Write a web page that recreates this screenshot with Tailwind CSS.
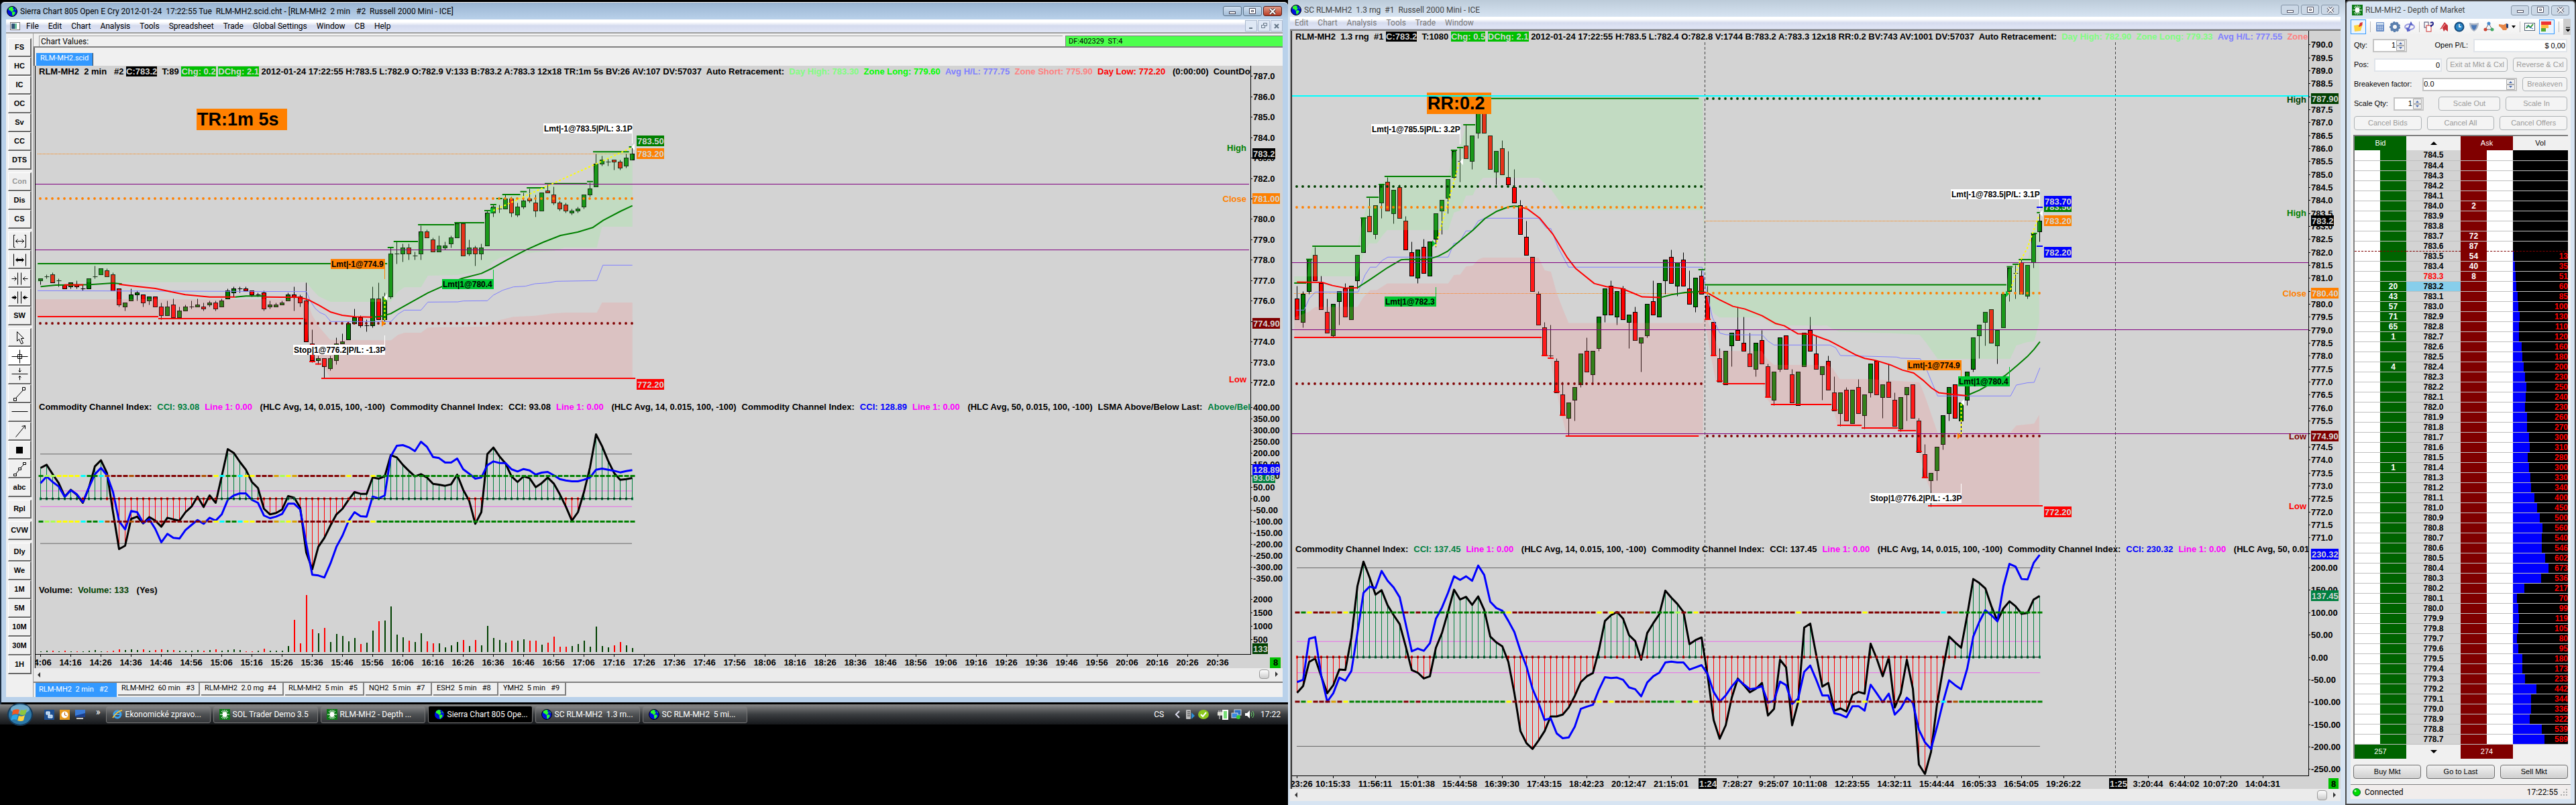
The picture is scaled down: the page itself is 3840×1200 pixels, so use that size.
<!DOCTYPE html>
<html lang="en">
<head>
  <meta charset="UTF-8">
  <meta name="viewport" content="width=device-width, initial-scale=1.0">
  <title>Sierra Chart - RLM-MH2</title>
  <script src="https://cdn.jsdelivr.net/npm/@tailwindcss/browser@4"></script>
</head>
<body class="bg-black font-['Liberation_Sans',sans-serif] text-black">
  <!-- Shared icons -->
  <svg class="hidden">
    <symbol id="globe" viewBox="0 0 16 16">
      <circle cx="8" cy="8" r="7.5" fill="#0010e0" stroke="#000"/>
      <path d="M3 3l4-2 3 1-1 2 2 1-2 3-2 1-1-2-3-1zM8 9l3-1 2 2-2 3-2 2-1-3zM12 3l2 2-1 1z" fill="#2bff2b"/>
    </symbol>
    <symbol id="sun" viewBox="0 0 16 16">
      <rect width="16" height="16" fill="#0a7a14"/>
      <circle cx="8" cy="8" r="3.5" fill="#fff"/>
      <path d="M8 1v14M1 8h14M3 3l10 10M13 3L3 13M5 1.500l6 13M11 1.500l-6 13" stroke="#fff"/>
    </symbol>
  </svg>

  <main class="flex min-h-screen">
    <!-- Left monitor -->
    <div class="flex w-1/2 flex-col">
      <section class="flex flex-col bg-[#b9d1ea] mt-[3px] rounded-t-md border-l-2 border-[#1c2e42]">
        <!-- Title bar -->
        <header class="flex h-[26px] items-center rounded-t-md border-t border-white bg-linear-to-b from-[#99b4d1] to-[#b9d1ea] pl-2 pr-[9px]">
          <svg class="mr-1 size-4"><use href="#globe"/></svg>
          <h1 class="flex-1 whitespace-pre font-['Roboto',sans-serif] text-xs">Sierra Chart 805 Open E Cry 2012-01-24  17:22:55 Tue  RLM-MH2.scid.cht - [RLM-MH2  2 min   #2  Russell 2000 Mini - ICE]</h1>
          <div class="flex gap-[2px]">
            <button aria-label="Minimize" class="grid h-[15px] w-7 place-items-center rounded-[3px] border border-[#5b7287] bg-linear-to-b from-[#cfdeee] to-[#a4bdd8]"><svg width="12" height="10"><rect x="1.5" y="5.5" width="9" height="3" fill="#fff" stroke="#445"/></svg></button>
            <button aria-label="Maximize" class="grid h-[15px] w-7 place-items-center rounded-[3px] border border-[#5b7287] bg-linear-to-b from-[#cfdeee] to-[#a4bdd8]"><svg width="12" height="10"><path d="M1.500 .5h9v8h-9zM4.500 3.500h3v2h-3z" fill="#fff" stroke="#445"/></svg></button>
            <button aria-label="Close" class="grid h-[15px] w-7 place-items-center rounded-[3px] border border-[#5a1c14] bg-linear-to-b from-[#e09a88] to-[#b83a22]"><svg width="12" height="10"><path d="M2 1l8 8M10 1l-8 8" stroke="#433" stroke-width="4"/><path d="M2 1l8 8M10 1l-8 8" stroke="#fff" stroke-width="2"/></svg></button>
          </div>
        </header>

        <div class="ml-[7px] mr-2 flex flex-col bg-[#f0f0f0]">
          <!-- Menu -->
          <nav class="flex h-[21px] items-center border-b-2 border-[#a0a0a0] bg-linear-to-b from-white from-20% via-[#d5dbee] via-50% to-[#e1e6f6] pl-[6px] font-['Roboto',sans-serif] text-xs">
            <svg class="mr-2 h-3 w-4"><rect x=".5" y=".5" width="14" height="11" fill="#fff" stroke="#777"/><rect x="2" y="2" width="5" height="8" fill="#357"/><rect x="7" y="2" width="3" height="8" fill="#6b9"/></svg>
            <div id="menu" class="flex flex-1 gap-[14px]"></div>
            <div class="flex gap-px text-[#5b6b80]">
              <button aria-label="Minimize chart" class="grid h-[17px] w-[18px] place-items-center border border-[#a9b8ce] bg-[#dfe8f5]"><svg width="8" height="8"><rect x="1" y="6" width="5" height="2" fill="#678"/></svg></button>
              <button aria-label="Restore chart" class="grid h-[17px] w-[18px] place-items-center border border-[#a9b8ce] bg-[#dfe8f5]"><svg width="9" height="9"><path d="M3.500 3V.5h5v4H6M.5 3.500h5v4h-5z" fill="none" stroke="#678"/></svg></button>
              <button aria-label="Close chart" class="grid h-[17px] w-[18px] place-items-center border border-[#a9b8ce] bg-[#dfe8f5]"><svg width="8" height="8"><path d="M1 1l6 6M7 1L1 7" stroke="#678" stroke-width="2"/></svg></button>
            </div>
          </nav>

          <div class="flex">
            <!-- Tool buttons -->
            <aside id="tools" class="flex w-[41px] shrink-0 flex-col gap-1 border-r border-[#a0a0a0] pl-[3px] pr-[2px] pt-[7px] text-[11px] font-bold"></aside>

            <div class="flex min-w-0 flex-1 flex-col">
              <div class="flex h-[21px] items-center border-b-2 border-[#808080] pt-[3px] font-['Roboto',sans-serif] text-xs">
                <div class="ml-2 h-full flex-1 border-l border-t border-[#a0a0a0] pl-[2px] leading-4">Chart Values:</div>
                <div class="ml-1 h-full w-[324px] border-l border-t border-[#808080] bg-[#4dff4d] pl-1 text-[11px] leading-4 whitespace-pre">DF:402329  ST:4</div>
              </div>
              <div class="h-[27px] border-l-2 border-[#696969] pl-[2px] pt-[2px]">
                <button class="h-[21px] w-[85px] border-r border-[#444] bg-[#3399ff] pb-1 text-left pl-[6px] font-['Roboto',sans-serif] text-[11px] text-white">RLM-MH2.scid</button>
              </div>

              <!-- 2 min chart -->
              <div class="flex h-[898px] bg-[#d3d3d3] pl-[2px]">
                <div class="relative min-w-0 flex-1 overflow-hidden border-l border-black">
                  <svg class="absolute inset-0 size-full text-xs font-bold"><g id="chart-a" transform="translate(-53 -98)"></g></svg>
                  <div id="head-a" class="absolute left-[5px] top-px flex whitespace-pre text-[13px] leading-[15px] font-bold"></div>
                  <div id="cci-a" class="absolute left-[5px] top-[501px] flex gap-2 whitespace-pre text-[13px] leading-[15px] font-bold"></div>
                  <div class="absolute left-[5px] top-[774px] flex gap-2 whitespace-pre text-[13px] leading-[15px] font-bold"><span>Volume:</span><span class="text-[#004000]">Volume: 133</span><span> (Yes)</span></div>
                </div>
                <svg class="w-[48px] shrink-0 text-[13px] font-bold"><g id="axis-a" transform="translate(-1864 -98)"></g></svg>
              </div>

              <div class="flex h-5 items-start justify-between bg-[#ebebeb] pl-[5px] pr-[6px] pt-[2px]">
                <svg class="mt-1" width="6" height="8"><path d="M5 0v8L1 4z" fill="#333"/></svg>
                <div class="flex items-center gap-2"><div class="h-[14px] w-[15px] rounded-sm border border-[#999] bg-linear-to-b from-white to-[#ccc]"></div><svg width="6" height="8"><path d="M1 0v8l4-4z" fill="#333"/></svg></div>
              </div>
              <!-- Chart tabs -->
              <div id="tabs" class="flex h-[23px] gap-[2px] border-t-2 border-[#808080] pl-[3px] font-['Roboto',sans-serif] text-[11px] whitespace-pre"></div>
            </div>
          </div>
        </div>
        <div class="h-[11px] border-b-[3px] border-black"></div>
      </section>

      <!-- Taskbar -->
      <footer class="flex h-[30px] items-center bg-linear-to-b from-[#8a8a8a] via-[#3a3d40] via-50% to-[#16181b] pl-[10px] pr-[11px] font-['Roboto',sans-serif] text-xs text-white">
        <button aria-label="Start" class="-my-2"><svg class="h-[34px] w-10" viewBox="0 0 40 34"><ellipse cx="20" cy="17" rx="19" ry="17" fill="#153a5a"/><ellipse cx="20" cy="17" rx="17" ry="15" fill="#2b78a8"/><ellipse cx="20" cy="9" rx="14" ry="7" fill="#8fc0dc" opacity=".7"/><path d="M9 11q5-3 10-1l-2 7q-5-2-9 1z" fill="#f15a22"/><path d="M21 10q5 2 9-1l-2 8q-4 2-9 0z" fill="#8cc63f"/><path d="M8 19q4-3 9-1l-2 7q-5-2-9 1z" fill="#2aa5e8"/><path d="M18 19q5 2 9-1l-2 8q-4 2-9 0z" fill="#ffd23c"/></svg></button>
        <div class="ml-4 flex items-center gap-2">
          <svg width="15" height="15"><rect width="15" height="15" fill="#1d4f91"/><path d="M3 3h5v4H3zM6 8h6v4H6z" fill="#9cc8f0" stroke="#fff"/></svg>
          <svg width="15" height="15"><rect width="15" height="15" fill="#e89a20"/><circle cx="7.500" cy="7.500" r="5" fill="#fff"/><path d="M7.500 4v4l3 1" fill="none" stroke="#b50"/></svg>
          <svg width="15" height="15"><rect width="15" height="11" fill="#3a7bd8"/><path d="M0 9l15-4v6H0z" fill="#1c3f8a"/><rect x="2" y="12" width="10" height="2" fill="#ccc"/></svg>
        </div>
        <span class="ml-4 mr-2 -mt-2 text-sm">»</span>
        <div id="tasks" class="flex flex-1 gap-1"></div>
        <span class="mr-4">CS</span>
        <svg class="mr-2" width="8" height="12"><path d="M7 1L2 6l5 5" fill="none" stroke="#dde" stroke-width="2"/></svg>
        <div class="mr-2 flex items-center gap-1">
          <svg width="15" height="16"><rect x="1" y="1" width="7" height="14" rx="1" fill="#bbb"/><path d="M3 4h4M3 7h4M3 10h4" stroke="#333"/><path d="M9 5l5 5-5 5z" fill="#2a8fd8"/></svg>
          <svg width="17" height="16"><ellipse cx="8" cy="8" rx="8" ry="7" fill="#8cc81e"/><path d="M4 8l3 3 5-6" fill="none" stroke="#fff" stroke-width="2"/></svg>
          <svg class="ml-2" width="16" height="16"><rect x="8" y="2" width="7" height="13" fill="#7d7" stroke="#fff" stroke-width="2"/><path d="M2 2v3M5 2v3M0 5h7v4H0zM3 9v6" stroke="#eee" fill="#ddc"/></svg>
          <svg width="16" height="16"><rect x="5" y="1" width="10" height="8" fill="#2b6fc4" stroke="#ddd"/><rect x="1" y="6" width="9" height="7" fill="#3d8be0" stroke="#ddd"/><circle cx="11" cy="12" r="3" fill="#3c3"/></svg>
          <svg width="16" height="16"><path d="M1 6h3l4-4v12l-4-4H1z" fill="#fff"/><path d="M10 5q2 3 0 6M12 3q4 5 0 10" fill="none" stroke="#6d6"/></svg>
        </div>
        <span>17:22</span>
      </footer>
    </div>

    <!-- Range chart window -->
    <section class="flex min-w-0 flex-1 flex-col bg-[#d7e4f2]">
      <header class="flex h-[25px] items-center bg-linear-to-b from-[#bccbd9] to-[#d7e4f2] pl-1 pr-[9px] pt-1">
        <svg class="mr-1 size-4"><use href="#globe"/></svg>
        <h2 class="flex-1 whitespace-pre font-['Roboto',sans-serif] text-xs text-[#444]">SC RLM-MH2  1.3 rng  #1  Russell 2000 Mini - ICE</h2>
        <div class="flex gap-[3px]">
          <button aria-label="Minimize" class="grid h-[15px] w-[27px] place-items-center rounded-[3px] border border-[#8494a6] bg-[#cbd8e6]"><svg width="12" height="10"><rect x="1.500" y="5.500" width="9" height="3" fill="#fff" stroke="#556"/></svg></button>
          <button aria-label="Maximize" class="grid h-[15px] w-[27px] place-items-center rounded-[3px] border border-[#8494a6] bg-[#cbd8e6]"><svg width="12" height="10"><path d="M1.500 .5h9v8h-9zM4.500 3.500h3v2h-3z" fill="#fff" stroke="#556"/></svg></button>
          <button aria-label="Close" class="grid h-[15px] w-[27px] place-items-center rounded-[3px] border border-[#8494a6] bg-[#cbd8e6]"><svg width="12" height="10"><path d="M2 1l8 8M10 1l-8 8" stroke="#556" stroke-width="4"/><path d="M2 1l8 8M10 1l-8 8" stroke="#fff" stroke-width="2"/></svg></button>
        </div>
      </header>
      <div class="ml-[3px] mr-[7px] flex flex-col bg-[#f0f0f0]">
        <nav id="menu-b" class="flex h-[19px] items-center gap-[14px] border-b border-[#a9afc0] bg-linear-to-b from-white from-20% via-[#d5dbee] via-50% to-[#e1e6f6] pl-[7px] font-['Roboto',sans-serif] text-xs text-[#777]"></nav>
        <div class="flex h-[1132px] border-l-2 border-t-2 border-[#808080] bg-[#d3d3d3]">
          <div class="relative min-w-0 flex-1 overflow-hidden border-l border-black">
            <svg class="absolute inset-0 size-full text-xs font-bold"><g id="chart-b" transform="translate(-1926 -46)"></g></svg>
            <div id="head-b" class="absolute left-[5px] top-px flex whitespace-pre text-[13px] leading-[15px] font-bold"></div>
            <div id="cci-b" class="absolute left-[5px] top-[765px] flex gap-2 whitespace-pre text-[13px] leading-[15px] font-bold"></div>
          </div>
          <svg class="w-[48px] shrink-0 text-[13px] font-bold"><g id="axis-b" transform="translate(-3442 -46)"></g></svg>
        </div>
        <div class="flex h-[18px] items-center justify-between bg-[#ebebeb] pl-[6px] pr-[6px]">
          <svg width="6" height="8"><path d="M5 0v8L1 4z" fill="#333"/></svg>
          <div class="flex items-center gap-2"><div class="h-[15px] w-[15px] rounded-sm border border-[#999] bg-linear-to-b from-white to-[#ccc]"></div><svg width="6" height="8"><path d="M1 0v8l4-4z" fill="#333"/></svg></div>
        </div>
      </div>
    </section>

    <!-- Depth of Market -->
    <section class="flex w-[344px] shrink-0 flex-col rounded-t-md border-2 border-[#4a4a4a] bg-[#d7e4f2] px-[6px] pb-[7px] text-[11px]">
      <header class="flex h-[26px] items-center gap-1 px-[2px]">
        <svg class="size-4"><use href="#sun"/></svg>
        <h2 class="flex-1 font-['Roboto',sans-serif] text-xs text-[#444]">RLM-MH2 - Depth of Market</h2>
        <div class="flex gap-[3px]">
          <button aria-label="Minimize" class="grid h-[15px] w-[27px] place-items-center rounded-[3px] border border-[#8494a6] bg-[#cbd8e6]"><svg width="12" height="10"><rect x="1.500" y="5.500" width="9" height="3" fill="#fff" stroke="#556"/></svg></button>
          <button aria-label="Maximize" class="grid h-[15px] w-[27px] place-items-center rounded-[3px] border border-[#8494a6] bg-[#cbd8e6]"><svg width="12" height="10"><path d="M1.500 .5h9v8h-9zM4.500 3.500h3v2h-3z" fill="#fff" stroke="#556"/></svg></button>
          <button aria-label="Close" class="grid h-[15px] w-[27px] place-items-center rounded-[3px] border border-[#8494a6] bg-[#cbd8e6]"><svg width="12" height="10"><path d="M2 1l8 8M10 1l-8 8" stroke="#556" stroke-width="4"/><path d="M2 1l8 8M10 1l-8 8" stroke="#fff" stroke-width="2"/></svg></button>
        </div>
      </header>
      <div class="flex flex-1 flex-col bg-[#f0f0f0]">
        <!-- Icon strip -->
        <div class="flex h-[24px] items-center justify-between bg-linear-to-b from-white to-[#f0f0f0]">
          <button aria-label="Pin" class="grid h-[22px] w-[23px] place-items-center border border-[#3399ff] bg-[#eaf4fd]"><svg width="16" height="16"><path d="M1 6l13-2-3 10-9 1z" fill="#ffd23c"/><path d="M8 8l2-6 4-1-1 5-4 2z" fill="#d33"/></svg></button>
          <i class="h-4 w-px bg-[#bbb]"></i>
          <button aria-label="Calculator"><svg width="16" height="16"><rect x="2" y="1" width="12" height="14" rx="1" fill="#6b8fc8"/><rect x="3" y="2" width="10" height="3" fill="#cde"/><path d="M4 7h8M4 9.500h8M4 12h8" stroke="#fff" stroke-dasharray="2 1"/></svg></button>
          <button aria-label="Settings"><svg width="16" height="16"><circle cx="8" cy="8" r="5" fill="none" stroke="#5a7fae" stroke-width="4"/><circle cx="8" cy="8" r="7" fill="none" stroke="#5a7fae" stroke-width="2" stroke-dasharray="3 2"/></svg></button>
          <button aria-label="Refresh"><svg width="16" height="16"><ellipse cx="8" cy="8" rx="7" ry="4" fill="none" stroke="#9a9ae0" stroke-width="2"/><path d="M5 14L10 2l2 4M4 9l1 5 4-1" fill="none" stroke="#5560c8" stroke-width="2"/></svg></button>
          <i class="h-4 w-px bg-[#bbb]"></i>
          <button aria-label="Orders"><svg width="16" height="16"><rect x="1" y="1" width="6" height="8" fill="#fff" stroke="#446"/><rect x="4" y="6" width="7" height="9" fill="#fff" stroke="#c33"/><path d="M10 2q4-2 4 1t-3 3v2" fill="none" stroke="#228" stroke-width="2"/></svg></button>
          <button aria-label="Bookmark"><svg width="16" height="16"><path d="M2 12L9 1l5 5v9l-4-3-2 3-2-5z" fill="#c8323a"/><path d="M5 10l5-6" stroke="#fbb"/></svg></button>
          <button aria-label="Clock"><svg width="16" height="16"><circle cx="8" cy="8" r="6.500" fill="#2a86c8" stroke="#174a7a" stroke-width="2"/><path d="M8 4v4h3" fill="none" stroke="#fff" stroke-width="1.500"/></svg></button>
          <button aria-label="Shield"><svg width="16" height="16"><path d="M1 2q7 2 14 0 0 9-7 13-7-4-7-13z" fill="#aab4c4"/><path d="M4 5q4 1 8 0 0 5-4 8-4-3-4-8z" fill="#4a78b8"/></svg></button>
          <button aria-label="Link"><svg width="16" height="16"><path d="M8 3L3 12h10z" fill="none" stroke="#667"/><circle cx="8" cy="3" r="2.500" fill="#48c"/><circle cx="3" cy="12" r="2.500" fill="#c43"/><circle cx="13" cy="12" r="2.500" fill="#4a6"/></svg></button>
          <button aria-label="Hand" class="flex items-center gap-1"><svg width="16" height="16"><path d="M1 4l7 1 4-2 3 5-3 5H7L4 9 1 7z" fill="#e8884a"/><path d="M12 3l3 1v6l-3-1z" fill="#24427a"/></svg><svg width="6" height="4"><path d="M0 0h6L3 4z"/></svg></button>
          <i class="h-4 w-px bg-[#bbb]"></i>
          <button aria-label="Chart"><svg width="16" height="16"><rect x=".5" y="2.500" width="15" height="11" fill="#fff" stroke="#567"/><path d="M3 10l3-4 3 3 4-5" fill="none" stroke="#393" stroke-width="2"/><path d="M3 6l10 5" stroke="#36c"/></svg></button>
          <button aria-label="Ladder" class="grid h-[22px] w-[23px] place-items-center border border-[#3399ff] bg-[#eaf4fd]"><svg width="16" height="16"><rect width="15" height="5" fill="#e33"/><rect y="5" width="11" height="5" fill="#fb4"/><rect y="10" width="7" height="5" fill="#5a3"/></svg></button>
          <i class="h-4 w-px bg-[#bbb]"></i>
          <button aria-label="More" class="grid h-full w-[11px] place-items-end bg-[#ccc] pb-1"><svg width="8" height="8"><path d="M1 1h6M1 4h6L4 7z" stroke="#000"/></svg></button>
        </div>

        <!-- Order form -->
        <form class="flex flex-col gap-2 px-[5px] pt-[5px]">
          <div class="flex h-[21px] items-center">
            <label for="qty" class="mr-2">Qty:</label>
            <div class="flex h-5 w-[51px] border-2 border-[#c4c4c4] bg-white"><input id="qty" value="1" class="min-w-0 flex-1 text-right"><svg class="mx-px h-4 w-[13px]"><path d="M.5 .5h12v7H.5zM.5 8.500h12v7H.5z" fill="#eee" stroke="#aaa"/><path d="M4 6l2.500-3L9 6zM4 10l2.500 3L9 10z" fill="#4a6ab0"/></svg></div>
            <label for="pl" class="ml-auto mr-2">Open P/L:</label>
            <input id="pl" value="$ 0,00" class="h-5 w-[140px] border-2 border-[#e0e4ea] bg-white px-px text-right">
          </div>
          <div class="flex items-center">
            <label for="pos" class="mr-2">Pos:</label>
            <input id="pos" value="0" class="mr-[7px] h-5 min-w-0 flex-1 border-2 border-[#e0e4ea] bg-white px-px text-right">
            <button type="button" class="mr-2 h-[21px] w-[91px] rounded-sm border border-[#adb2b5] bg-[#f4f4f4] text-[#9a9a9a]">Exit at Mkt &amp; Cxl</button>
            <button type="button" class="h-[21px] w-[81px] rounded-sm border border-[#adb2b5] bg-[#f4f4f4] text-[#9a9a9a]">Reverse &amp; Cxl</button>
          </div>
          <div class="flex items-center">
            <label for="be" class="mr-4">Breakeven factor:</label>
            <div class="mr-2 flex h-5 min-w-0 flex-1 border-2 border-[#c4c4c4] bg-white"><input id="be" value="0.0" class="min-w-0 flex-1"><svg class="mx-px h-4 w-[13px]"><path d="M.5 .5h12v7H.5zM.5 8.500h12v7H.5z" fill="#eee" stroke="#aaa"/><path d="M4 6l2.500-3L9 6zM4 10l2.500 3L9 10z" fill="#4a6ab0"/></svg></div>
            <button type="button" class="h-[21px] w-[67px] rounded-sm border border-[#adb2b5] bg-[#f4f4f4] text-[#9a9a9a]">Breakeven</button>
          </div>
          <div class="flex items-center">
            <label for="sq" class="mr-2">Scale Qty:</label>
            <div class="flex h-5 w-[45px] border-2 border-[#c4c4c4] bg-white"><input id="sq" value="1" class="min-w-0 flex-1 text-right"><svg class="mx-px h-4 w-[13px]"><path d="M.5 .5h12v7H.5zM.5 8.500h12v7H.5z" fill="#eee" stroke="#aaa"/><path d="M4 6l2.500-3L9 6zM4 10l2.500 3L9 10z" fill="#4a6ab0"/></svg></div>
            <button type="button" class="ml-auto mr-2 h-[21px] w-[92px] rounded-sm border border-[#adb2b5] bg-[#f4f4f4] text-[#9a9a9a]">Scale Out</button>
            <button type="button" class="h-[21px] w-[92px] rounded-sm border border-[#adb2b5] bg-[#f4f4f4] text-[#9a9a9a]">Scale In</button>
          </div>
          <div class="flex gap-2">
            <button type="button" class="h-[21px] flex-1 rounded-sm border border-[#adb2b5] bg-[#f4f4f4] text-[#9a9a9a]">Cancel Bids</button>
            <button type="button" class="h-[21px] flex-1 rounded-sm border border-[#adb2b5] bg-[#f4f4f4] text-[#9a9a9a]">Cancel All</button>
            <button type="button" class="h-[21px] flex-1 rounded-sm border border-[#adb2b5] bg-[#f4f4f4] text-[#9a9a9a]">Cancel Offers</button>
          </div>
        </form>

        <!-- Ladder -->
        <table class="mx-1 mt-[7px] table-fixed border-l-2 border-t-2 border-[#808080] text-center">
          <colgroup><col class="w-[39px]"><col class="w-[39px]"><col class="w-[81px]"><col class="w-[39px]"><col class="w-[39px]"><col></colgroup>
          <thead>
            <tr class="h-[22px]">
              <th colspan="2" class="bg-[#006400] font-normal text-white">Bid</th>
              <th class="font-normal"><svg class="mx-auto" width="10" height="5"><path d="M0 5L5 0l5 5z"/></svg></th>
              <th colspan="2" class="bg-[#800000] font-normal text-white">Ask</th>
              <th class="font-normal">Vol</th>
            </tr>
          </thead>
          <tbody id="ladder" class="text-xs leading-[14px] font-bold"></tbody>
          <tfoot>
            <tr class="h-[22px]">
              <td colspan="2" class="bg-[#006400] text-white">257</td>
              <td><svg class="mx-auto" width="10" height="5"><path d="M0 0l5 5 5-5z"/></svg></td>
              <td colspan="2" class="bg-[#800000] text-white">274</td>
              <td></td>
            </tr>
          </tfoot>
        </table>
        <div class="flex gap-2 px-1 pt-[9px]">
          <button class="h-[21px] flex-1 rounded-sm border border-[#707070] bg-linear-to-b from-[#f2f2f2] to-[#cfcfcf]">Buy Mkt</button>
          <button class="h-[21px] flex-1 rounded-sm border border-[#707070] bg-linear-to-b from-[#f2f2f2] to-[#cfcfcf]">Go to Last</button>
          <button class="h-[21px] flex-1 rounded-sm border border-[#707070] bg-linear-to-b from-[#f2f2f2] to-[#cfcfcf]">Sell Mkt</button>
        </div>
        <div class="mt-auto flex h-[22px] items-center border-t border-[#808080] bg-[#f1edec] px-[3px] font-['Roboto',sans-serif] text-xs">
          <svg class="mr-[6px]" width="12" height="12"><circle cx="6" cy="6" r="5.500" fill="#0d0" stroke="#063"/><circle cx="4" cy="4" r="1.500" fill="#bfb"/></svg>
          <span class="flex-1">Connected</span>
          <span class="mr-1">17:22:55</span>
          <svg width="12" height="12"><path d="M8 2h2M8 6h2M4 6h2M8 10h2M4 10h2M0 10h2" stroke="#aaa" stroke-width="2"/></svg>
        </div>
      </div>
    </section>
  </main>

  <script>
    const $ = id => document.getElementById(id);

    // ---------- menus, tools, tabs ----------
    $('menu').innerHTML = ['File', 'Edit', 'Chart', 'Analysis', 'Tools', 'Spreadsheet', 'Trade', 'Global Settings', 'Window', 'CB', 'Help']
      .map(t => `<button>${t}</button>`).join('');
    $('menu-b').innerHTML = ['Edit', 'Chart', 'Analysis', 'Tools', 'Trade', 'Window'].map(t => `<button>${t}</button>`).join('');

    const icons = {
      wide: 'M3 4v18M5 4h-2M5 22h-2M21 4v18M19 4h2M19 22h2M6 13h12M9 10l-3 3 3 3M15 10l3 3-3 3',
      wide2: 'M3 4v18M21 4v18M6 13h12M7 12h10M7 14h10M9 10l-3 3 3 3M15 10l3 3-3 3',
      narrow: 'M9 4v18M14 4v18M0 13h7M4 10l3 3-3 3M24 13h-7M20 10l-3 3 3 3',
      narrow2: 'M9 4v18M14 4v18M0 13h7M1 12h5M1 14h5M4 10l3 3-3 3M24 13h-7M22 12h-5M22 14h-5M20 10l-3 3 3 3',
      arrow: 'M8 4v14l3-3 3 7 3-1-3-7h4z',
      cross: 'M12 3v20M0 13h24M9 10h6v6H9z',
      split: 'M0 11h24M12 2v6M10 6l2 2 2-2M12 20v-6M10 16l2-2 2 2',
      segment: 'M3 19h4v4H3zM16 3h4v4h-4zM6 19L17 7',
      hline: 'M0 11h24',
      ray: 'M6 21L20 4M15 5l5-1v5',
      poly: 'M3 20h4v3H3zM10 11h4v3h-4zM17 3h4v3h-4zM6 20l5-6M13 11l5-5'
    };
    const groups = [
      ['FS', 'HC', 'IC', 'OC', 'Sv', 'CC', 'DTS'], ['Con', 'Dis', 'CS'],
      ['wide', 'wide2', 'narrow', 'narrow2', 'SW'],
      ['arrow', 'cross', 'split', 'segment', 'hline', 'ray', 'square', 'poly', 'abc'],
      ['Rpl'], ['CVW'], ['Dly', 'We', '1M', '5M', '10M', '30M', '1H']
    ];
    const toolFace = t => t === 'square' ? '<span class="mx-auto block size-[10px] bg-black"></span>'
      : icons[t] ? `<svg class="mx-auto" width="25" height="26"><path d="${icons[t]}" transform="translate(.5 .5)" fill="none" stroke="#000"/></svg>` : t;
    $('tools').innerHTML = groups.map(g => `<div class="flex flex-col">${g.map(t =>
      `<button aria-label="${t}" class="h-7 border-b-2 border-r-2 border-b-[#696969] border-r-[#696969] border-l border-t border-l-white border-t-white ${t === 'Con' ? 'text-[#999]' : ''} ${t === 'cross' ? 'bg-white' : ''}">${toolFace(t)}</button>`).join('')}</div>`).join('');

    const tabs = [['RLM-MH2  2 min   #2', 'w-[121px]'], ['RLM-MH2  60 min   #3', 'w-[122px]'], ['RLM-MH2  2.0 mg  #4', 'w-[123px]'], ['RLM-MH2  5 min   #5', 'w-[118px]'],
      ['NQH2  5 min   #7', 'w-[99px]'], ['ESH2  5 min   #8', 'w-[97px]'], ['YMH2  5 min   #9', 'w-[99px]']];
    $('tabs').innerHTML = tabs.map(([t, w], i) => `<button class="${w} pl-[5px] text-left ${i ? 'h-[19px] border-b-2 border-r-2 border-[#808080]' : 'h-[21px] bg-[#3399ff] text-white'}">${t}</button>`).join('');

    const tasks = [['ie', 'Ekonomické zpravo...'], ['sun', 'SOL Trader Demo 3.5'], ['sun', 'RLM-MH2 - Depth ...'], ['globe', 'Sierra Chart 805 Ope...'], ['globe', 'SC RLM-MH2  1.3 rn...'], ['globe', 'SC RLM-MH2  5 mi...']];
    $('tasks').innerHTML = tasks.map(([ic, t], i) => `<button class="flex h-[26px] w-[156px] items-center gap-1 overflow-hidden rounded-[3px] border border-[#777] px-2 whitespace-pre ${i === 3 ? 'bg-black' : 'bg-white/10'}">
      ${ic === 'ie' ? '<svg class="size-4 shrink-0"><circle cx="8" cy="8" r="5" fill="none" stroke="#3aa0f0" stroke-width="3"/><path d="M4 8h9" stroke="#3aa0f0" stroke-width="2"/><path d="M1 13Q8 3 15 2" fill="none" stroke="#fc3" stroke-width="1.500"/></svg>' : `<svg class="size-4 shrink-0"><use href="#${ic}"/></svg>`}${t}</button>`).join('');

    // ---------- header lines ----------
    const seg = ([t, c]) => `<span class="${c || ''}">${t}</span>`;
    const cciHead = (a, b, tail) => [['Commodity Channel Index:'], ['CCI: ' + a, 'text-[#008040]'], ['Line 1: 0.00', 'text-[#ff00ff]'], [' (HLC Avg, 14, 0.015, 100, -100)'],
      ['Commodity Channel Index:'], ['CCI: ' + a], ['Line 1: 0.00', 'text-[#ff00ff]'], [' (HLC Avg, 14, 0.015, 100, -100)'],
      ['Commodity Channel Index:'], ['CCI: ' + b, 'text-[#0000ff]'], ['Line 1: 0.00', 'text-[#ff00ff]'], [' (HLC Avg, 50, 0.015, 100, -100)'], ...tail].map(seg).join('');
    $('cci-a').innerHTML = cciHead('93.08', '128.89', [['LSMA Above/Below Last:'], ['Above/Below', 'text-[#008040]']]);
    $('cci-b').innerHTML = cciHead('137.45', '230.32', []);
    $('head-a').innerHTML = [['RLM-MH2  2 min   #2 '], ['C:783.2', 'bg-black text-[#d3d3d3]'], ['  T:89 '], ['Chg: 0.2', 'bg-[#00c000] text-[#d3d3d3]'], [' '], ['DChg: 2.1', 'bg-[#00c000] text-[#d3d3d3]'],
      [' 2012-01-24 17:22:55 H:783.5 L:782.9 O:782.9 V:133 B:783.2 A:783.3 12x18 TR:1m 5s BV:26 AV:107 DV:57037  Auto Retracement:  '],
      ['Day High: 783.30  ', 'text-[#80ff80]'], ['Zone Long: 779.60  ', 'text-[#00ff00]'], ['Avg H/L: 777.75  ', 'text-[#8080ff]'], ['Zone Short: 775.90  ', 'text-[#ff8080]'], ['Day Low: 772.20', 'text-[#ff0000]'], ['   (0:00:00)  CountDown']].map(seg).join('');
    $('head-b').innerHTML = [['RLM-MH2  1.3 rng  #1 '], ['C:783.2', 'bg-black text-[#d3d3d3]'], ['  T:1080 '], ['Chg: 0.5', 'bg-[#00c000] text-[#d3d3d3]'], [' '], ['DChg: 2.1', 'bg-[#00c000] text-[#d3d3d3]'],
      [' 2012-01-24 17:22:55 H:783.5 L:782.4 O:782.8 V:1744 B:783.2 A:783.3 12x18 RR:0.2 BV:743 AV:1001 DV:57037  Auto Retracement:  '],
      ['Day High: 782.90  ', 'text-[#80ff80]'], ['Zone Long: 779.33  ', 'text-[#80ff80]'], ['Avg H/L: 777.55  ', 'text-[#8080ff]'], ['Zone Short: 775.90', 'text-[#ff8080]']].map(seg).join('');

    // ---------- drawing helpers ----------
    const hl = (x1, x2, y, c, w = 1, dash = '') => `<path d="M${x1} ${y}H${x2}" stroke="${c}" stroke-width="${w}" stroke-dasharray="${dash}" fill="none"/>`;
    const dots = (x1, x2, y, c) => { let s = ''; for (let x = x1; x <= x2; x += 9) s += `<circle cx="${x}" cy="${y}" r="1.900" fill="${c}"/>`; return s; };
    const poly = (p, c, w) => `<polyline points="${p}" fill="none" stroke="${c}" stroke-width="${w}" stroke-linejoin="round" vector-effect="non-scaling-stroke"/>`;
    const area = (p, c) => `<polygon points="${p}" fill="${c}" fill-opacity=".2"/>`;
    const steps = (s, c) => s.split(' ').map(t => { const [a, b, y] = t.split(','); return `<path d="M${a} ${y}H${b}" stroke="${c}" stroke-width="2" vector-effect="non-scaling-stroke"/>`; }).join('');
    const tag = (x, y, w, h, t, bg, fg, cls = '') => `<rect x="${x}" y="${y}" width="${w}" height="${h}" fill="${bg}"/><text x="${x + 1}" y="${y + h - (h > 20 ? 7 : 3)}" fill="${fg}" class="${cls}">${t}</text>`;
    const label = (x, y, t, c) => `<text x="${x}" y="${y + 5}" fill="${c}" text-anchor="end" class="text-[13px]">${t}</text>`;

    function candles(data, x0, y0, k) {
      return data.trim().split(/\s+/).map((row, i) => {
        const [o, h, l, c] = row.split(',').map(Number), x = x0 + i * 9, y = t => Math.round(y0 - t * k) + .5;
        const top = y(Math.max(o, c)), hgt = y(Math.min(o, c)) - top;
        return `<path d="M${x} ${y(h)}V${y(l)}" stroke="#000"/>` + (hgt
          ? `<rect x="${x - 3}" y="${top}" width="6" height="${hgt}" fill="${c > o ? '#008000' : '#ff0000'}" stroke="#000"/>`
          : `<path d="M${x - 3} ${top}h7" stroke="#000"/>`);
      }).join('');
    }
    const stripColor = { g: '#008000', l: '#a8ff50', y: '#ffff00', c: '#00ffff', b: '#b05000', r: '#800000', o: '#d8a000' };
    function cci(black, blue, strip, x0, zero, k, band) {
      const pts = a => a.map((v, i) => `${x0 + i * 9},${zero - v * k}`).join(' ');
      const xe = x0 + (black.length - 1) * 9;
      let s = hl(x0, xe, zero - 200 * k, '#000', 1, '1 1') + hl(x0, xe, zero + 200 * k, '#000', 1, '1 1')
        + hl(x0, xe, zero - 35 * k, '#ff00ff', 1, '1 1') + hl(x0, xe, zero + 35 * k, '#ff00ff', 1, '1 1');
      black.forEach((v, i) => {
        s += `<path d="M${x0 + i * 9} ${zero}V${zero - v * k}" stroke="${v > 0 ? '#008040' : '#ff0000'}"/>`;
      });
      s += poly(pts(black), '#000', 3) + poly(pts(blue), '#0000ff', 3);
      [...strip].forEach((ch, i) => {
        const x = x0 + i * 9;
        s += `<path d="M${x - 3} ${zero - band * k}h7M${x - 3} ${zero + band * k}h7" stroke="${stripColor[ch]}" stroke-width="3"/>`;
        s += `<rect x="${x - 1.5}" y="${zero - 2}" width="3" height="4" fill="${black[i] < 0 || 'br'.includes(ch) ? '#ff0000' : '#008040'}"/>`;
      });
      return s + hl(x0, xe, zero, '#000', 1);
    }

    // ---------- 2 min chart ----------
    const candlesA = `70,71,68,71 72,73,71,72 73,74,69,69 70,71,67,70 68,68,66,66 67,69,66,69 68,70,66,67 66,68,65,66 66,71,66,71 72,77,71,72
      73,76,73,76 75,76,72,72 73,74,65,65 66,66,57,58 57,59,55,59 60,66,60,63 63,65,60,64 63,63,57,59 60,62,58,62 62,62,57,57
      57,59,51,53 53,60,53,57 58,61,52,52 52,57,52,55 55,58,55,57 57,60,56,57 57,61,57,58 57,59,55,56 58,60,57,59 59,60,55,56
      57,61,57,60 61,66,61,65 64,67,62,66 66,67,64,66 66,67,65,65 65,65,62,63 63,64,62,63 64,65,55,56 57,60,56,58 57,59,57,58
      58,60,58,59 60,64,60,63 63,67,55,62 62,63,57,59 60,69,40,40 39,46,30,31 31,33,29,32 32,32,22,28 27,33,26,32 31,42,29,39
      39,44,39,40 41,50,41,49 49,56,49,52 52,53,47,48 48,51,45,48 48,67,47,61 61,69,51,51 51,64,49,62 62,86,61,83 83,89,78,83
      83,88,79,86 86,88,80,83 82,84,80,82 83,97,80,94 94,95,91,91 90,91,84,84 84,92,84,87 86,89,85,87 88,92,86,91 91,98,91,98
      98,98,82,82 83,90,82,86 86,87,77,83 83,88,80,86 87,104,87,103 103,107,101,106 105,107,103,105 105,112,105,110 110,111,101,103 102,108,101,106
      106,113,105,109 110,115,108,109 108,112,101,104 104,113,104,113 114,117,113,113 112,116,107,108 108,109,104,105 107,108,103,104 103,105,102,104 104,106,103,105
      106,112,105,112 112,118,111,115 116,132,116,127 127,131,126,129 128,130,126,128 129,129,124,128 128,129,124,125 126,132,125,130 129,135,129,132`;
    const blackA = [138,152,110,70,10,40,18,-18,50,145,172,115,-60,-225,-210,-90,-80,-110,-82,-98,-125,-85,-92,-98,-60,-35,10,-37,15,-18,100,222,205,165,130,75,48,-45,-70,-64,-48,12,5,-40,-240,-315,-215,-175,-120,-70,-45,-5,30,22,22,95,90,100,195,185,152,125,100,110,95,67,63,58,65,108,40,-10,-112,-60,200,229,190,158,100,75,100,92,52,70,95,68,20,-35,-98,-60,30,140,288,235,170,115,85,88,93];
    const blueA = [70,100,75,55,8,38,20,-15,50,110,138,105,30,-100,-137,-55,-60,-108,-92,-135,-195,-157,-175,-178,-140,-117,-95,-112,-85,-98,-70,-5,15,24,24,-5,-18,-75,-87,-80,-68,-22,-22,-48,-200,-340,-343,-352,-290,-215,-165,-100,-60,-78,-80,10,2,15,190,237,240,230,213,255,232,187,182,162,162,180,132,112,90,95,150,167,160,160,132,122,133,127,108,117,120,105,88,82,78,78,85,95,130,135,130,125,118,124,128];
    const volA = [1,2,2,1,2,1,1,1,2,3,1,1,2,4,3,4,3,4,2,3,4,3,3,2,2,2,3,2,3,4,2,3,4,3,1,1,2,5,2,2,2,9,48,13,85,34,28,36,15,27,24,16,21,12,14,32,46,47,68,26,22,17,15,28,16,13,13,7,10,15,18,9,18,10,39,21,18,14,17,17,19,17,17,11,14,23,8,8,9,12,17,8,38,9,7,10,15,10,6];
    const rowsA = candlesA.trim().split(/\s+/).map(r => r.split(',').map(Number));
    const stripA = 'gllyyyycggcbrrrbrrrrrrrrrrrbrycggcyyrrrolyorrrrrrrbyrrry' + 'g'.repeat(43);
    const highsA = '88,905,279 906,920,207 920,977,180 977,1062,105 1062,1132,96 1132,1146,42 1146,1160,15 1160,1174,-12 1174,1216,-30 1216,1231,-43 1231,1273,-60 1273,1372,-79 1372,1386,-88 1386,1470,-221 1470,1480,-243';

    let a = hl(56, 945, 229.5, '#ff8000', 1, '1 1') + candles(candlesA, 60.5, 630.95, 3.045);
    a += `<g transform="translate(0 300) scale(.6378 .3333)">`
      + area('83,279 899,279 913,207 920,180 977,180 984,105 1062,105 1069,96 1132,96 1139,42 1146,42 1153,15 1160,-12 1174,-30 1216,-30 1224,-43 1231,-43 1238,-60 1273,-60 1280,-79 1372,-79 1379,-88 1386,-88 1393,-221 1470,-221 1478,-243 1478,114 1407,114 1395,207 1320,207 1295,222 1250,228 1195,242 1170,252 1153,270 1139,300 1125,318 1083,325 1070,330 1000,333 984,385 945,385 930,405 913,450 772,450 745,425 730,395 716,362 83,362', '#80ff80')
      + area('83,438 716,438 730,510 745,560 772,620 914,622 930,598 945,588 984,588 1000,565 1083,562 1139,560 1153,545 1170,530 1200,517 1250,512 1290,502 1320,498 1395,498 1407,453 1478,453 1478,792 772,792 758,740 740,705 725,690 716,525 370,525 83,516', '#ff8080')
      + poly('88,400 370,402 716,404 725,445 737,480 748,498 760,508 773,538 914,538 930,505 945,487 984,487 1000,451 1070,450 1083,446 1139,445 1153,420 1175,398 1200,383 1228,380 1250,369 1280,365 1300,358 1395,355 1409,286 1478,286', '#8080ff', 1)
      + steps(highsA, '#008000') + steps('88,370,516 370,709,525 723,737,717 737,751,728 751,1485,792', '#ff0000')
      + poly('95,382 130,375 210,373 264,366 285,370', '#008000', 2) + poly('150,374 195,374', '#ff0000', 2)
      + poly('278,371 306,378 363,390 433,418 490,428 550,428', '#ff0000', 2) + poly('550,428 575,424 620,424', '#008000', 2)
      + poly('617,428 700,430 720,440 745,465 772,495 800,510 830,517 871,518', '#ff0000', 2)
      + poly('871,518 890,515 913,503 955,458 1000,410 1035,380 1080,345 1125,323 1150,300 1185,262 1230,217 1270,183 1310,153 1350,138 1385,118 1410,85 1450,45 1478,20', '#008000', 2)
      + `</g>`;
    a += hl(53, 1862, 274.5, '#800080') + hl(53, 1862, 372.5, '#800080') + dots(60, 943, 296, '#ff8000') + dots(60, 943, 482, '#800000');
    a += `<path d="M735 314L942 220M573.500 444V482" stroke="#ffff00" stroke-width="2" stroke-dasharray="3 3"/>`;
    a += `<path d="M569 477l5 5-5 5z" fill="#ff8000"/><path d="M731 309l5 5-5 5z" fill="#00c832"/><path d="M946 214l-5 5 5 5zM577 438l-5 5 5 5z" fill="#fff"/>`;
    a += `<path d="M573.500 400v16" stroke="#ff8000"/><path d="M735.500 402v16" stroke="#00c832"/><path d="M573.500 500v16M942.500 198v16" stroke="#fff"/>`;
    a += tag(293, 162, 135, 32, 'TR:1m 5s', '#ff8000', '#000', 'text-[27px]');
    a += tag(810, 184, 133, 15, 'Lmt|-1@783.5|P/L: 3.1P', '#fff', '#000') + tag(493, 386, 81, 15, 'Lmt|-1@774.9', '#ff8000', '#000')
      + tag(659, 416, 77, 15, 'Lmt|1@780.4', '#00c832', '#000') + tag(437, 514, 137, 15, 'Stop|1@776.2|P/L: -1.3P', '#fff', '#000');
    a += tag(949, 202, 41, 16, '783.50', '#008000', '#d3d3d3', 'text-[13px]') + tag(949, 221, 41, 16, '783.20', '#ff8000', '#d3d3d3', 'text-[13px]') + tag(949, 565, 41, 16, '772.20', '#ff0000', '#d3d3d3', 'text-[13px]');
    a += label(1858, 220, 'High', '#008000') + label(1858, 296, 'Close', '#ff8000') + label(1858, 565, 'Low', '#ff0000');
    a += cci(blackA, blueA, stripA, 60.5, 743.5, .3333, 102);
    volA.forEach((h, i) => { const r = rowsA[i]; a += `<rect x="${60 + i * 9}" y="${972 - h}" width="2" height="${h}" fill="${r[3] < r[0] ? '#ff0000' : '#004000'}"/>`; });
    a += hl(53, 1864, 975.5, '#000');
    for (let i = 0; i < 40; i++) {
      const m = 14 * 60 + 6 + i * 10, x = 60 + i * 45;
      a += `<path d="M${x + .5} 976v3" stroke="#000"/><text x="${x}" y="992" text-anchor="middle" class="text-[13px]">${Math.floor(m / 60)}:${String(m % 60).padStart(2, '0')}</text>`;
    }
    $('chart-a').innerHTML = a;

    const tick = (x, y, t) => `<path d="M${x} ${Math.round(y) + .5}h3" stroke="#000"/><text x="${x + 4}" y="${Math.round(y) + 5}">${t}</text>`;
    let ax = `<path d="M1864.500 98V976" stroke="#000"/>`;
    // 781 and 775 sit under their price tags
    for (let p = 772; p <= 787; p++) ax += tick(1864, 113.3 + (787 - p) * 30.45, p === 781 || p === 775 ? '' : p.toFixed(1));
    for (let v = -350; v <= 400; v += 50) ax += tick(1864, 743.3 - v * .3398, v.toFixed(2));
    for (let v = 500; v <= 2000; v += 500) ax += tick(1864, 973 - v * .04, v);
    ax += tag(1867, 221, 34, 16, '783.2', '#000', '#d3d3d3') + tag(1867, 288, 41, 16, '781.00', '#ff8000', '#d3d3d3') + tag(1867, 474, 41, 16, '774.90', '#800000', '#d3d3d3')
      + tag(1867, 704, 34, 16, '93.08', '#008040', '#d3d3d3') + tag(1867, 692, 41, 16, '128.89', '#0000ff', '#d3d3d3') + tag(1867, 959, 23, 16, '133', '#004000', '#d3d3d3') + '<rect x="1893" y="980" width="16" height="16" fill="#00c000"/>'
      + '<text x="1898" y="992">8</text>';
    $('axis-a').innerHTML = ax;

    // ---------- 1.3 range chart ----------
    const candlesB = `102,107,94,94 93,105,91,104 105,117,104,117 119,122,109,109 108,111,98,98 97,102,89,89 88,100,87,100 101,105,92,105 106,108,95,95 94,107,94,107
      109,119,106,119 120,133,120,133 134,141,128,128 127,138,125,138 139,146,133,146 147,149,136,136 135,144,131,144 145,146,133,133 132,134,121,121 120,124,111,111
      110,121,108,121 122,125,112,112 111,124,111,124 125,135,122,135 136,140,127,140 141,148,135,148 149,159,148,159 155,160,147,155 161,169,156,156 155,165,152,165
      166,178,164,176 178,179,166,166 165,165,152,152 151,159,146,159 160,163,150,150 149,159,146,146 145,152,139,139 138,140,127,127 126,132,119,119 118,118,105,105
      104,105,92,92 91,93,80,80 80,92,79,80 78,79,66,66 65,70,57,57 56,62,49,62 63,68,55,68 69,81,68,81 82,87,74,74 73,82,69,82
      83,95,82,95 96,106,93,106 107,109,96,96 95,105,92,105 106,107,94,94 93,96,83,96 97,99,86,86 85,87,74,87 88,100,87,100 101,109,96,96
      95,108,95,108 109,117,104,117 118,121,108,108 107,116,103,116 117,120,107,107 106,113,100,100 99,110,97,110 111,113,104,104 103,107,94,94 93,93,80,80
      79,83,70,70 69,82,69,82 84,89,76,89 90,99,86,86 85,95,82,82 81,89,76,76 75,85,72,85 86,90,77,77 76,77,64,64 63,74,61,74
      75,87,74,87 88,88,75,75 73,75,62,62 61,74,61,74 76,89,76,89 90,95,82,82 81,88,75,75 73,76,63,76 78,80,67,67 66,72,59,59
      58,66,53,66 67,68,55,55 54,67,54,67 68,71,58,58 57,65,52,65 66,77,64,77 78,78,65,65 64,69,56,69 70,77,64,64 63,66,53,53
      52,64,51,64 65,68,55,68 69,69,56,56 55,56,43,43 42,46,33,33 32,35,22,35 36,45,32,45 46,57,44,57 58,68,55,68 69,69,56,56
      55,62,49,62 63,74,61,74 75,87,74,87 88,92,79,92 93,97,84,97 98,98,85,85 84,90,77,90 91,104,91,104 105,114,101,114 112,115,102,112
      116,117,104,104 103,115,102,115 116,127,114,127 128,135,124,132`;
    const blackB = [-80,-65,-11,-3,-43,-81,-63,-28,-29,44,159,214,179,140,150,116,94,74,24,-29,-35,-48,-43,21,54,101,151,129,135,117,136,106,46,33,24,-11,-81,-166,-193,-206,-187,-166,-133,-133,-129,-113,-87,-56,-43,-36,16,81,94,101,86,49,36,-6,54,76,96,149,133,119,101,29,38,44,-41,-141,-183,-153,-91,-48,-63,-79,-71,-58,-131,-116,-6,-23,-153,-101,66,75,4,-66,-58,-120,-115,-122,-85,-78,-82,30,-3,-43,-1,-113,-81,-6,-71,-241,-262,-213,-106,-26,46,33,21,94,175,166,154,114,81,109,125,114,97,99,129,137];
    const blueB = [-56,-51,41,45,-41,-100,-81,-46,-53,-31,54,144,158,155,193,171,156,134,74,13,19,14,31,86,111,144,181,173,181,171,205,184,124,110,104,81,56,14,-21,-71,-103,-141,-137,-171,-182,-180,-156,-116,-111,-107,-73,-45,-47,-46,-51,-68,-72,-88,-57,-43,-35,-12,-10,-12,-12,-28,-23,-18,-38,-78,-100,-86,-66,-50,-61,-72,-70,-65,-102,-98,-55,-63,-105,-93,-33,-19,-51,-86,-86,-126,-129,-135,-110,-110,-120,-62,-81,-101,-82,-129,-115,-91,-103,-163,-191,-206,-156,-101,-52,-63,-72,-26,46,79,105,94,80,159,209,203,175,174,211,229];
    const stripB = 'rgyrrrory' + 'g'.repeat(9) + 'rgr' + 'g'.repeat(14) + 'y' + 'r'.repeat(14) + 'yryrrrrbrgggglrgy' + 'r'.repeat(16) + 'y' + 'r'.repeat(10) + 'y' + 'r'.repeat(12) + 'crb' + 'g'.repeat(14);

    let b = `<path d="M2541.500 63V1156M3153.500 63V1156" stroke="#444" stroke-dasharray="4 3"/>`
      + hl(2541, 3040, 329.5, '#ff8000', 1, '1 1') + hl(1929, 2541, 437.5, '#ff8000', 1, '1 1') + candles(candlesB, 1933.5, 839.9, 3.868);
    b += `<g transform="translate(1920 0) scale(.5102 .3333)">`
      + area('18,1266 53,1266 62,1160 71,1101 203,1101 220,975 238,882 265,882 273,825 291,789 467,789 485,672 503,660 520,558 547,558 556,440 1212,440 1217,1206 1226,1274 2099,1274 2108,1193 2126,1182 2143,1161 2161,1161 2179,1044 2195,951 2195,1440 2180,1527 2160,1530 2128,1545 2110,1605 1898,1605 1863,1530 1845,1497 1760,1490 1610,1483 1590,1470 1575,1456 1420,1455 1384,1420 1261,1420 1243,1400 1226,1340 1212,940 820,940 800,915 770,850 732,795 570,795 556,820 540,873 520,875 503,942 485,950 468,1029 290,1029 275,1055 260,1088 238,1088 222,1130 212,1180 203,1236 18,1236', '#80ff80')
      + area('18,1420 60,1395 80,1373 203,1373 220,1330 240,1298 260,1297 290,1268 468,1268 485,1230 503,1228 520,1192 540,1188 556,1160 570,1152 732,1152 750,1208 768,1215 785,1310 805,1390 820,1445 1212,1445 1217,1400 1243,1500 1261,1570 1384,1570 1400,1605 1420,1632 1575,1632 1590,1645 1612,1695 1700,1695 1845,1710 1863,1780 1898,1936 2110,1935 2128,1903 2180,1895 2195,1855 2195,2262 1898,2262 1880,2200 1861,2130 1843,2020 1834,1925 1782,1925 1678,1913 1606,1902 1590,1810 1411,1808 1395,1775 1387,1716 1270,1716 1250,1704 1235,1590 1217,1430 1212,1950 815,1950 800,1860 785,1752 765,1602 742,1590 735,1509 18,1509', '#ff8080')
      + poly('24,1387 47,1387 62,1335 80,1306 205,1306 225,1230 240,1195 258,1195 275,1165 292,1150 468,1150 485,1088 500,1085 520,1033 538,1032 556,988 575,976 732,976 755,1020 768,1022 790,1110 820,1195 1210,1195 1218,1270 1240,1420 1262,1490 1280,1497 1386,1498 1402,1525 1420,1543 1583,1543 1600,1555 1614,1590 1778,1597 1790,1602 1847,1604 1865,1650 1898,1771 2111,1771 2128,1722 2160,1712 2180,1710 2197,1645', '#8080ff', 1)
      + steps('18,53,1266 53,71,1160 71,212,1101 212,229,975 229,265,882 265,282,825 282,476,789 476,494,672 494,512,660 512,547,558 594,1200,440 1199,1217,1206 1217,2099,1274 2100,2117,1193 2117,2135,1182 2135,2171,1161 2171,2188,1044 2188,2197,951', '#008000')
      + steps('18,741,1509 741,759,1590 759,776,1602 776,794,1752 794,811,1857 811,1200,1950 1217,1235,1428 1235,1252,1590 1252,1270,1704 1270,1394,1716 1394,1411,1776 1411,1588,1809 1588,1605,1833 1605,1676,1902 1676,1782,1914 1782,1835,1926 1835,1852,2019 1852,1870,2136 1870,2205,2262', '#ff0000')
      + poly('26,1262 100,1263 130,1277 170,1289 203,1287', '#ff0000', 2)
      + poly('203,1287 240,1250 290,1198 330,1162 345,1160 410,1160 440,1145 465,1125 500,1080 540,1030 575,978 610,945 645,925 660,922 679,924', '#008000', 2)
      + poly('679,926 700,935 735,975 775,1050 815,1150 840,1200 895,1268 930,1282 975,1290 1010,1312 1035,1328 1088,1331', '#ff0000', 2)
      + poly('1088,1331 1120,1318 1160,1308 1212,1303', '#008000', 2)
      + poly('1200,1306 1226,1310 1260,1340 1300,1370 1335,1382 1385,1412 1425,1447 1450,1457 1490,1493 1530,1495 1565,1515 1580,1523 1620,1555 1660,1588 1685,1603 1720,1613 1760,1632 1795,1655 1828,1668 1855,1700 1880,1735 1902,1757 1935,1763 1985,1770', '#ff0000', 2)
      + poly('1985,1768 2020,1745 2060,1710 2095,1680 2130,1635 2160,1595 2180,1562 2197,1528', '#008000', 2)
      + `</g>`;
    b += [391.5, 491.5, 646.5].map(y => hl(1926, 3441, y, '#800080')).join('');
    b += dots(1933, 2536, 278, '#004000') + dots(2545, 3041, 147, '#004000') + dots(1933, 2536, 309, '#ff8000') + dots(2545, 3041, 437, '#ff8000') + dots(1933, 2536, 572, '#800000') + dots(2545, 3041, 650, '#800000');
    b += `<path d="M2140 367L2176 240M2997 432L3011 390 3022 370 3040 320M2923.500 602V650" fill="none" stroke="#ffff00" stroke-width="2" stroke-dasharray="3 3"/>`;
    b += `<path d="M2135 358l5 5-5 5zM2990 433l5 5-5 5z" fill="#00c832"/><path d="M2181 236l-5 5 5 5zM3045 313l-5 5 5 5zM2928 595l-5 5 5 5z" fill="#fff"/><path d="M2918 645l5 5-5 5z" fill="#ff8000"/>`;
    b += `<path d="M2176.500 200v15M3040.500 297v16M2923.500 721v15" stroke="#fff"/><path d="M2140.500 428v14M2995.500 547v14" stroke="#00c832"/><path d="M2923.500 552v14" stroke="#ff8000"/>`;
    b += hl(3036, 3045, 309, '#0000ff', 2) + hl(3036, 3045, 367, '#0000ff', 2);
    b += tag(2127, 138, 96, 32, 'RR:0.2', '#ff8000', '#000', 'text-[27px]') + hl(1926, 3442, 143, '#00ffff', 2);
    b += tag(2044, 185, 133, 15, 'Lmt|-1@785.5|P/L: 3.2P', '#fff', '#000') + tag(2064, 442, 77, 15, 'Lmt|1@782.3', '#00c832', '#000') + tag(2908, 282, 133, 15, 'Lmt|-1@783.5|P/L: 3.1P', '#fff', '#000')
      + tag(2843, 537, 81, 15, 'Lmt|-1@774.9', '#ff8000', '#000') + tag(2919, 561, 77, 15, 'Lmt|1@780.4', '#00c832', '#000') + tag(2787, 735, 137, 15, 'Stop|1@776.2|P/L: -1.3P', '#fff', '#000');
    b += [[300, '783.50', '#008000'], [292, '783.70', '#0000ff'], [321, '783.20', '#ff8000'], [368, '782.20', '#0000ff'], [755, '772.20', '#ff0000']].map(([y, t, c]) => tag(3047, y, 41, 16, t, c, '#d3d3d3', 'text-[13px]')).join('');
    b += label(3438, 148, 'High', '#004000') + label(3438, 317, 'High', '#008000') + label(3438, 437, 'Close', '#ff8000') + label(3438, 650, 'Low', '#800000') + label(3438, 754, 'Low', '#ff0000');
    b += cci(blackB, blueB, stripB, 1933.5, 979.5, .665, 100);
    b += hl(1926, 3442, 1156.5, '#000');
    [[1933, '23:26'], [1987, '10:15:33'], [2050, '11:56:11'], [2113, '15:01:38'], [2176, '15:44:58'], [2239, '16:39:30'], [2302, '17:43:15'], [2365, '18:42:23'], [2428, '20:12:47'], [2491, '21:15:01'],
      [2590, '7:28:27'], [2644, '9:25:07'], [2698, '10:11:08'], [2761, '12:23:55'], [2824, '14:32:11'], [2887, '15:44:44'], [2950, '16:05:33'], [3013, '16:54:05'], [3076, '19:26:22'], [3202, '3:20:44'], [3256, '6:44:02'], [3310, '10:07:20'], [3373, '14:04:31']]
      .forEach(([x, t], i) => { b += `<path d="M${x + .5} 1157v3" stroke="#000"/><text x="${i ? x : 1940}" y="1173" text-anchor="middle" class="text-[13px]">${t}</text>`; });
    b += tag(2532, 1160, 27, 16, '1:24', '#000', '#d3d3d3', 'text-[13px]') + tag(3144, 1160, 27, 16, '1:25', '#000', '#d3d3d3', 'text-[13px]');
    $('chart-b').innerHTML = b;

    let bx = `<path d="M3442.500 46V1157" stroke="#000"/>`;
    for (let p = 7710; p <= 7900; p += 5) bx += tick(3442, 66.3 + (7900 - p) * 3.868, (p / 10).toFixed(1));
    for (let v = -250; v <= 200; v += 50) bx += tick(3442, 979.5 - v * .667, v.toFixed(2));
    bx += tag(3446, 139, 41, 16, '787.90', '#004000', '#d3d3d3') + tag(3446, 321, 34, 16, '783.2', '#000', '#d3d3d3') + tag(3446, 429, 41, 16, '780.40', '#ff8000', '#d3d3d3') + tag(3446, 642, 41, 16, '774.90', '#800000', '#d3d3d3')
      + tag(3446, 818, 41, 16, '230.32', '#0000ff', '#d3d3d3') + tag(3446, 880, 41, 16, '137.45', '#008040', '#d3d3d3') + '<rect x="3472" y="1160" width="15" height="16" fill="#00c000"/><text x="3476" y="1173">8</text>';
    $('axis-b').innerHTML = bx;

    // ---------- ladder ----------
    const asks = { '784.0': 2, '783.7': 72, '783.6': 87, '783.5': 54, '783.4': 40, '783.3': 8 };
    const bids = { '783.2': 20, '783.1': 43, '783.0': 57, '782.9': 71, '782.8': 65, '782.7': 1, '782.4': 4, '781.4': 1 };
    const vols = [13, 35, 51, 60, 85, 100, 130, 110, 120, 160, 180, 200, 230, 250, 240, 230, 260, 270, 300, 310, 280, 300, 330, 340, 400, 450, 500, 560, 540, 546,
      602, 673, 536, 217, 70, 99, 119, 105, 80, 95, 180, 173, 233, 442, 344, 336, 322, 539, 589];
    let rows = '';
    for (let i = 0; i < 59; i++) {
      const p = ((7845 - i) / 10).toFixed(1), v = vols[i - 10];
      rows += `<tr class="h-[15px] border-b ${i === 9 ? 'border-dashed border-[#800000]' : 'border-[#c0c0c0]'}">
        <td class="bg-white"></td><td class="bg-[#006400] text-white">${bids[p] || ''}</td>
        <td class="${p === '783.2' ? 'bg-[#87ceeb]' : 'bg-[#d3d3d3]'} ${p === '783.3' ? 'text-[#ff0000]' : ''}">${p}</td>
        <td class="bg-[#800000] text-white">${asks[p] || ''}</td><td class="bg-white"></td>
        <td class="bg-black"><div class="flex h-[14px]"><div class="bg-[#0000ff]" style="width:${v ? v * .0965 : 0}%"></div><span class="ml-auto text-[#ff0000]">${v || ''}</span></div></td>
      </tr>`;
    }
    $('ladder').innerHTML = rows;
  </script>
</body>
</html>
